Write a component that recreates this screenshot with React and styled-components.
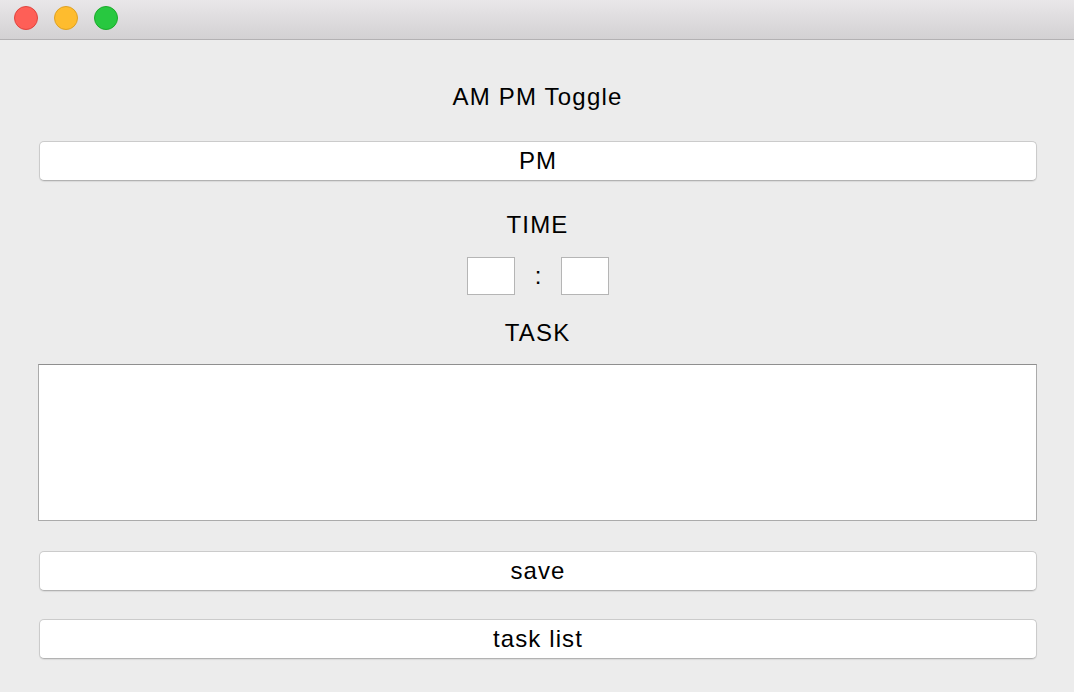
import React from 'react'
import styled, { createGlobalStyle } from 'styled-components'

const GlobalStyle = createGlobalStyle`
  html, body {
    margin: 0;
    padding: 0;
    background: #ececec;
  }
  * {
    box-sizing: border-box;
  }
`

const Window = styled.div`
  width: 1074px;
  height: 692px;
  background: #ececec;
  font-family: "Liberation Sans", Arial, sans-serif;
  color: #000;
  overflow: hidden;
`

const TitleBar = styled.div`
  height: 40px;
  display: flex;
  align-items: flex-start;
  gap: 16px;
  padding: 6px 0 0 14px;
  background: linear-gradient(#e9e7e9, #d3d1d3);
  border-bottom: 1px solid #b3b1b3;
`

const Light = styled.span`
  width: 24px;
  height: 24px;
  border-radius: 50%;
  background: ${(p) => p.fill};
  border: 1px solid ${(p) => p.edge};
`

const Content = styled.div`
  display: flex;
  flex-direction: column;
  align-items: stretch;
  padding: 0 37px 0 38px;
`

const Label = styled.div`
  text-align: center;
  font-size: 24px;
  line-height: 24px;
  height: 24px;
  letter-spacing: 1.2px;
  margin-top: ${(p) => p.top}px;
`

const PushButton = styled.button`
  display: block;
  height: 40px;
  margin: ${(p) => p.top}px 0 0 1px;
  padding: 0;
  background: #fff;
  border: 1px solid #cbcbcb;
  border-bottom-color: #b2b2b2;
  border-radius: 5px;
  box-shadow: 0 1px 1px rgba(0, 0, 0, 0.08);
  font-family: "Liberation Sans", Arial, sans-serif;
  font-size: 24px;
  letter-spacing: 1.1px;
  color: #000;
  text-align: center;
`

const TimeRow = styled.div`
  display: flex;
  justify-content: center;
  align-items: center;
  margin-top: 20px;
  padding-left: 1px;
`

const TimeBox = styled.input`
  width: 48px;
  height: 38px;
  background: #fff;
  border: 1px solid #b5b5b5;
  outline: none;
  padding: 0;
`

const Colon = styled.span`
  width: 46px;
  text-align: center;
  font-size: 24px;
  line-height: 38px;
`

const TaskArea = styled.textarea`
  display: block;
  height: 157px;
  margin-top: 19px;
  background: #fff;
  border: 1px solid #ababab;
  border-top-color: #8f8f8f;
  outline: none;
  resize: none;
  padding: 4px;
`

export default function App() {
  return (
    <Window>
      <GlobalStyle />
      <TitleBar>
        <Light fill="#fe5f57" edge="#e0443e" />
        <Light fill="#febc2e" edge="#dea123" />
        <Light fill="#28c840" edge="#1aab29" />
      </TitleBar>
      <Content>
        <Label top={45}>AM PM Toggle</Label>
        <PushButton top={32}>PM</PushButton>
        <Label top={32}>TIME</Label>
        <TimeRow>
          <TimeBox />
          <Colon>:</Colon>
          <TimeBox />
        </TimeRow>
        <Label top={26}>TASK</Label>
        <TaskArea />
        <PushButton top={30}>save</PushButton>
        <PushButton top={28}>task list</PushButton>
      </Content>
    </Window>
  )
}
